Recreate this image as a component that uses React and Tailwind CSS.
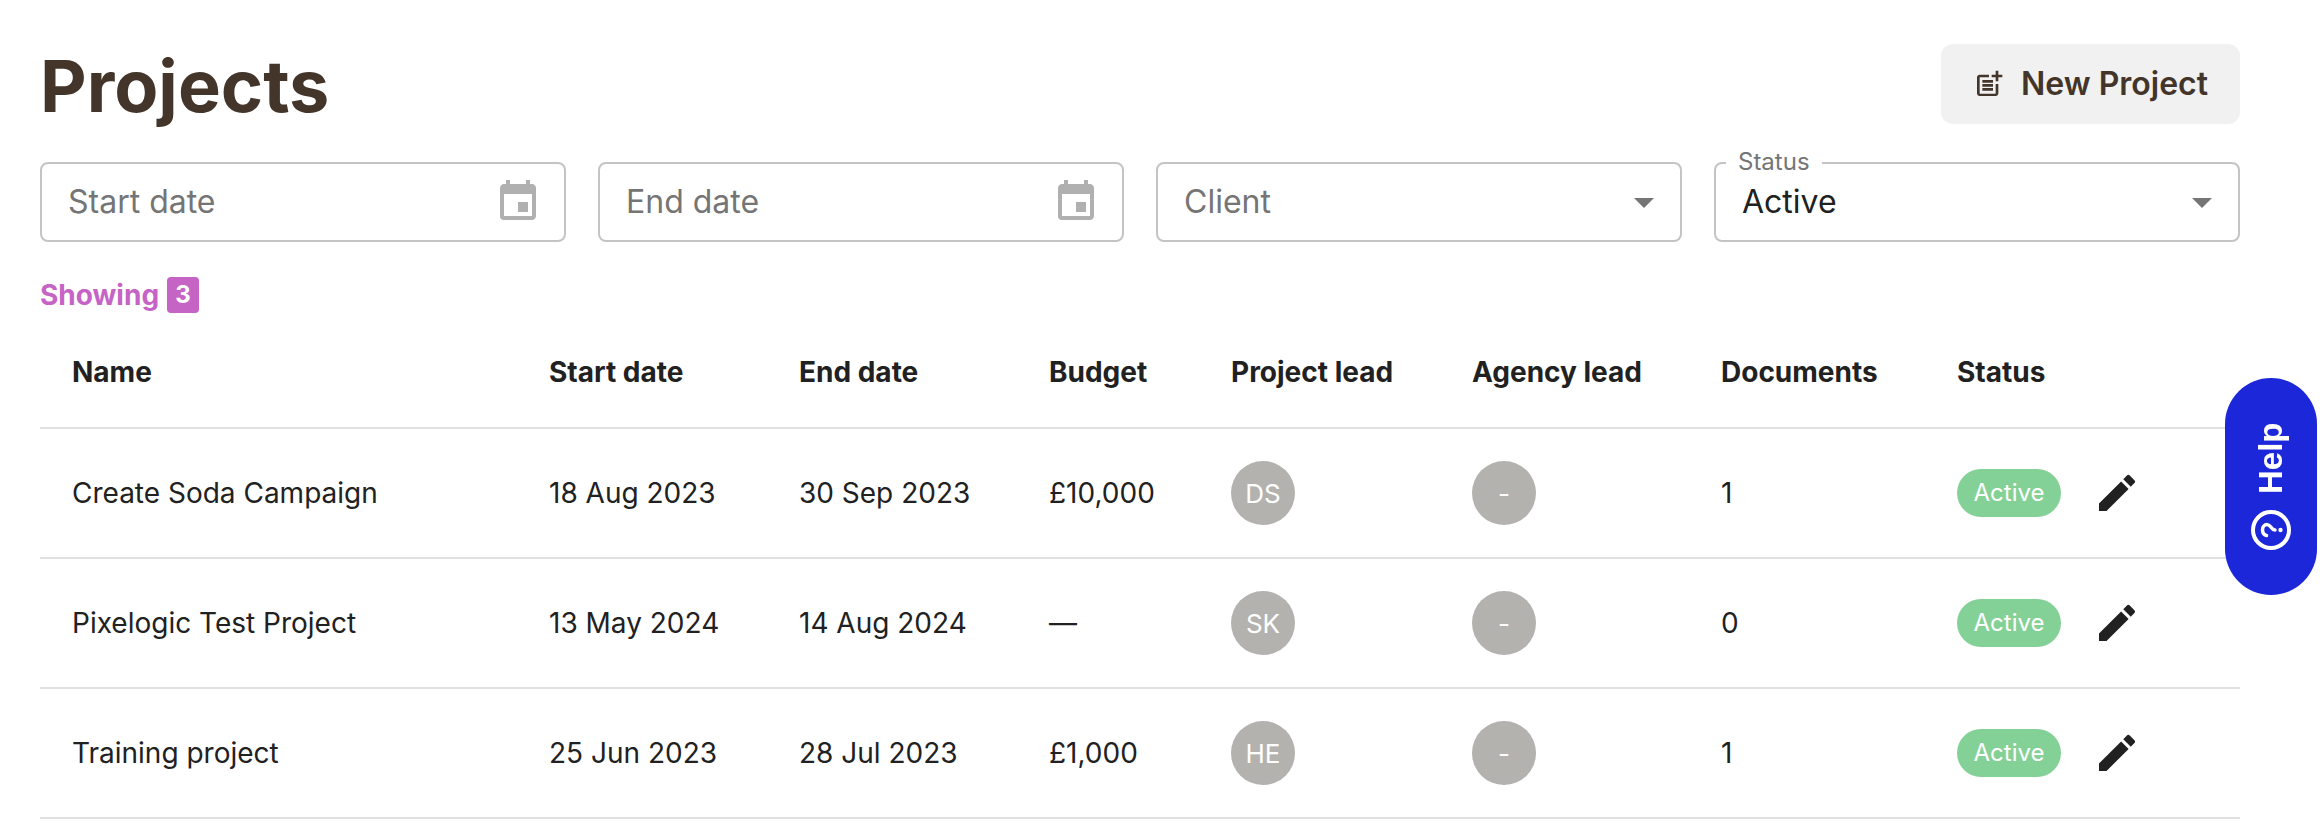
import { useState } from "react";
import { MdArrowDropDown, MdEdit, MdEvent, MdOutlinePostAdd } from "react-icons/md";

const columns = [
  { key: "name", label: "Name", width: "" },
  { key: "start", label: "Start date", width: "w-[250px]" },
  { key: "end", label: "End date", width: "w-[250px]" },
  { key: "budget", label: "Budget", width: "w-[182px]" },
  { key: "lead", label: "Project lead", width: "w-[241px]" },
  { key: "agency", label: "Agency lead", width: "w-[249px]" },
  { key: "documents", label: "Documents", width: "w-[236px]" },
  { key: "status", label: "Status", width: "w-[315px]" },
];

const projects = [
  {
    name: "Create Soda Campaign",
    start: "18 Aug 2023",
    end: "30 Sep 2023",
    budget: "£10,000",
    lead: "DS",
    agency: "-",
    documents: 1,
    status: "Active",
  },
  {
    name: "Pixelogic Test Project",
    start: "13 May 2024",
    end: "14 Aug 2024",
    budget: "—",
    lead: "SK",
    agency: "-",
    documents: 0,
    status: "Active",
  },
  {
    name: "Training project",
    start: "25 Jun 2023",
    end: "28 Jul 2023",
    budget: "£1,000",
    lead: "HE",
    agency: "-",
    documents: 1,
    status: "Active",
  },
];

function DateField({ id, label }) {
  const [value, setValue] = useState("");

  return (
    <div className="flex h-20 items-center rounded-lg border-2 border-[#c4c4c4] pl-[26px] pr-[22px]">
      <input
        id={id}
        type="text"
        value={value}
        placeholder={label}
        aria-label={label}
        onChange={(e) => setValue(e.target.value)}
        className="min-w-0 flex-1 bg-transparent text-[32px] outline-none placeholder:text-[#757575]"
      />
      <button type="button" aria-label={"Choose " + label.toLowerCase()}>
        <MdEvent className="size-12 text-[#b0b0b0]" />
      </button>
    </div>
  );
}

function SelectField({ id, label, options, initial = "" }) {
  const [value, setValue] = useState(initial);

  return (
    <div className="relative flex h-20 items-center rounded-lg border-2 border-[#c4c4c4]">
      {/* the label floats over the border once a value is picked */}
      {value && (
        <label
          htmlFor={id}
          className="absolute -top-4 left-[10px] bg-white px-3 text-2xl leading-7 text-[#757575]"
        >
          {label}
        </label>
      )}
      <select
        id={id}
        value={value}
        aria-label={label}
        onChange={(e) => setValue(e.target.value)}
        className={
          "h-full w-full appearance-none bg-transparent pl-[26px] pr-16 text-[32px] outline-none " +
          (value ? "text-[#212121]" : "text-[#757575]")
        }
      >
        <option value="" disabled hidden>
          {label}
        </option>
        {options.map((option) => (
          <option key={option}>{option}</option>
        ))}
      </select>
      <MdArrowDropDown className="pointer-events-none absolute right-3 size-12 text-[#757575]" />
    </div>
  );
}

function Avatar({ initials }) {
  return (
    <span className="flex size-16 items-center justify-center rounded-full bg-[#b3b2ae] text-[26px] text-white">
      {initials}
    </span>
  );
}

function ProjectRow({ project }) {
  return (
    <tr className="h-[130px] border-b-2 border-[#e0e0e0]">
      <td className="px-8">{project.name}</td>
      <td className="px-8">{project.start}</td>
      <td className="px-8">{project.end}</td>
      <td className="px-8">{project.budget}</td>
      <td className="px-8">
        <Avatar initials={project.lead} />
      </td>
      <td className="px-8">
        <Avatar initials={project.agency} />
      </td>
      <td className="px-8">{project.documents}</td>
      <td className="px-8">
        <div className="flex items-center gap-8">
          <span className="flex h-12 min-w-[104px] items-center justify-center rounded-full bg-[#84d197] px-4 text-2xl text-white">
            {project.status}
          </span>
          <button type="button" aria-label={"Edit " + project.name}>
            <MdEdit className="size-12" />
          </button>
        </div>
      </td>
    </tr>
  );
}

export default function App() {
  return (
    <main className="bg-white pb-2 pl-10 pr-20 pt-11 font-['Inter',sans-serif] text-[#212121]">
      {/* Title + action */}
      <header className="flex h-20 items-center justify-between">
        <h1 className="pt-1 text-7xl font-bold text-[#433529]">Projects</h1>
        <button
          type="button"
          className="flex h-20 items-center gap-4 rounded-xl bg-[#f1f1f1] px-8 text-[32px] font-semibold text-[#433529]"
        >
          <MdOutlinePostAdd className="size-8" />
          New Project
        </button>
      </header>

      {/* Filters */}
      <form className="mt-[38px] grid grid-cols-4 gap-8">
        <DateField id="start-date" label="Start date" />
        <DateField id="end-date" label="End date" />
        <SelectField id="client" label="Client" options={["Soda Co", "Pixelogic"]} />
        <SelectField
          id="status"
          label="Status"
          options={["Active", "Archived"]}
          initial="Active"
        />
      </form>

      <p className="mt-[35px] flex h-9 items-center gap-2 text-[28px] font-bold text-[#c664c6]">
        Showing
        <span className="flex h-9 w-8 items-center justify-center rounded bg-[#c664c6] text-2xl text-white">
          {projects.length}
        </span>
      </p>

      {/* Projects table */}
      <table className="w-full table-fixed text-left text-[28px]">
        <thead>
          <tr className="h-[115px] border-b-2 border-[#e0e0e0]">
            {columns.map((column) => (
              <th key={column.key} scope="col" className={"px-8 pt-1 font-bold " + column.width}>
                {column.label}
              </th>
            ))}
          </tr>
        </thead>
        <tbody>
          {projects.map((project) => (
            <ProjectRow key={project.name} project={project} />
          ))}
        </tbody>
      </table>

      {/* Floating help tab */}
      <button
        type="button"
        className="fixed right-[3px] top-[378px] flex h-[217px] w-[92px] rotate-180 items-center justify-center gap-4 rounded-full bg-[#1b27d8] font-['Liberation_Sans',sans-serif] text-[33px] font-bold text-white [writing-mode:vertical-rl]"
      >
        <svg viewBox="0 0 40 40" className="size-10 rotate-90" fill="none" stroke="currentColor">
          <circle cx="20" cy="20" r="18" strokeWidth="4" />
          <path
            d="M14.500 15.500c.6-2.500 2.700-4 5.500-4 3.200 0 5.500 1.900 5.500 4.500 0 4-5.500 4-5.500 8"
            strokeWidth="3.500"
            strokeLinecap="round"
          />
          <circle cx="20" cy="29.500" r="2.200" fill="currentColor" stroke="none" />
        </svg>
        Help
      </button>
    </main>
  );
}
